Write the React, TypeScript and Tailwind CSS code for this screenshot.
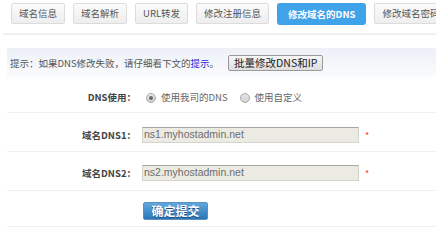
const tabs = ["域名信息", "域名解析", "URL转发", "修改注册信息", "修改域名的DNS", "修改域名密码"];

const cjk = { fontFamily: '"Noto Sans CJK SC", "Liberation Sans", sans-serif' };
const latin = { fontFamily: '"Liberation Sans", "Noto Sans CJK SC", sans-serif' };

function Radio({ checked }: { checked?: boolean }) {
  return (
    <span className="w-[10px] h-[10px] rounded-full border border-[#a9a9a9] bg-gradient-to-b from-[#e6e6e6] to-[#d2d2d2] flex items-center justify-center shrink-0">
      {checked && <span className="w-[4px] h-[4px] rounded-full bg-[#6a6a6a]" />}
    </span>
  );
}

function Field({ value }: { value: string }) {
  return (
    <div className="flex items-center gap-[6px]">
      <div
        className="w-[217px] h-[16px] bg-[#ebebe4] border border-[#d4d4cc] border-t-[#a8a8a0] flex items-center pl-[1px] text-[10.5px] text-[#6d6d6d]"
        style={latin}
      >
        {value}
      </div>
      <span className="text-[#f33] text-[9px] leading-none">*</span>
    </div>
  );
}

export default function App() {
  return (
    <div className="w-[436px] h-[240px] bg-white overflow-hidden text-[#555]" style={cjk}>
      <div className="flex gap-[8px] pl-[11px] pt-[3px] h-[30px] whitespace-nowrap">
        {tabs.map((t, i) =>
          i === 4 ? (
            <div
              key={t}
              className="h-[22px] px-[11px] flex items-center rounded-[3px] bg-[#3fa3ea] text-white font-bold text-[9.5px] shrink-0"
            >
              {t}
            </div>
          ) : (
            <div
              key={t}
              className="h-[21px] px-[7px] flex items-center rounded-[2px] border border-[#dcdcdc] bg-gradient-to-b from-[#fbfbfb] to-[#eeeeee] text-[9.5px] text-[#555] shrink-0"
            >
              {t}
            </div>
          )
        )}
      </div>
      <div className="ml-[3px] mt-[3px] h-[2px] bg-[#f0f0f0]" />
      <div className="ml-[7px] mt-[13px] h-[30px] bg-gradient-to-b from-[#ecf0f7] to-[#fbfcfd] flex items-center pl-[3px] text-[9.5px] text-[#555]">
        <span>提示：如果DNS修改失败，请仔细看下文的</span>
        <span className="text-[#2828d8]">提示</span>
        <span>。</span>
        <span className="ml-[9px] h-[16px] px-[5px] flex items-center border border-[#9a9a9a] rounded-[2px] bg-gradient-to-b from-[#f6f6f6] to-[#dedede] text-[10.5px] text-[#222]">
          批量修改DNS和IP
        </span>
      </div>
      <div className="ml-[7px] mt-[5px]">
        <div className="h-[30px] flex items-center border-b border-[#f1f1f1]">
          <div className="w-[129px] text-right font-bold text-[9.5px] text-[#444]">DNS使用：</div>
          <div className="ml-[10px] flex items-center gap-[5px] text-[9.5px] text-[#666]">
            <Radio checked />
            <span>使用我司的DNS</span>
            <span className="w-[2px]" />
            <Radio />
            <span>使用自定义</span>
          </div>
        </div>
        <div className="h-[39px] pt-[14px] flex items-start border-b border-[#f1f1f1]">
          <div className="w-[129px] h-[16px] flex items-center justify-end font-bold text-[9.5px] text-[#444]">域名DNS1：</div>
          <div className="ml-[6px]">
            <Field value="ns1.myhostadmin.net" />
          </div>
        </div>
        <div className="h-[39px] pt-[13px] flex items-start border-b border-[#f1f1f1]">
          <div className="w-[129px] h-[16px] flex items-center justify-end font-bold text-[9.5px] text-[#444]">域名DNS2：</div>
          <div className="ml-[6px]">
            <Field value="ns2.myhostadmin.net" />
          </div>
        </div>
        <div className="h-[36px] pt-[11px] flex items-start border-b border-[#f1f1f1]">
          <div className="ml-[136px] w-[65px] h-[18px] rounded-[2px] border border-[#5d8fb8] bg-gradient-to-b from-[#5fa8de] to-[#2a76b6] flex items-center justify-center text-white font-bold text-[12px] [text-shadow:0_1px_0_#1d4f7c]">
            确定提交
          </div>
        </div>
      </div>
    </div>
  );
}
